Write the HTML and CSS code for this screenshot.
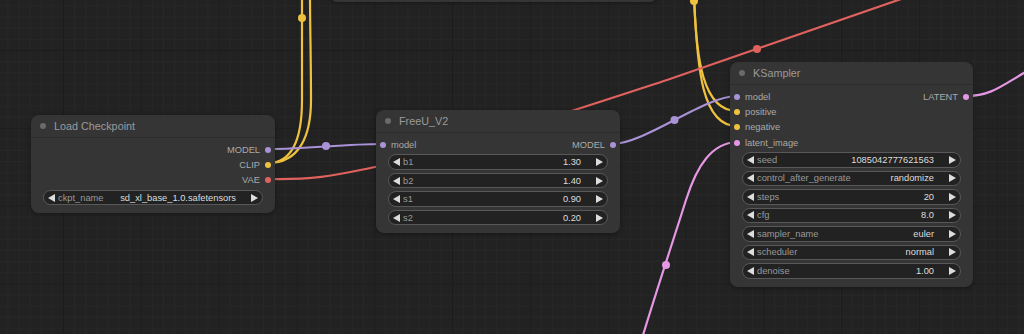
FILE: index.html
```html
<!DOCTYPE html>
<html lang="en">
<head>
  <meta charset="UTF-8">
  <meta name="viewport" content="width=device-width, initial-scale=1.0">
  <title>ComfyUI</title>
  <link rel="stylesheet" href="styles.css">
</head>
<body>

  <div class="canvas">

    <svg class="links" width="1024" height="334" viewBox="0 0 1024 334">
      <g class="link clip">
        <path d="M268,163 C292,163 302,140 302,100 L302,-5"/>
        <path d="M268,163 C300,163 311,135 311,100 C311,60 310,25 310,-5"/>
        <path d="M694,-5 C696,60 703,111 737,111"/>
        <path d="M694,-5 C697,70 702,126 737,126"/>
      </g>
      <g class="link vae">
        <path d="M268,179 C320,180 340,174 375,167 C470,145 560,115 667,80 L930,-11"/>
      </g>
      <g class="link model">
        <path d="M268,149 C310,149 341,144 383,144"/>
        <path d="M612,144 C645,144 704,96 737,96"/>
      </g>
      <g class="link latent">
        <path d="M966,96 C995,96 1005,82 1040,64"/>
        <path d="M737,142 C712,143 697,165 686,200 C675,235 655,295 640,345"/>
      </g>
      <circle class="marker clip" cx="302" cy="18" r="4"/>
      <circle class="marker clip" cx="694" cy="1" r="4"/>
      <circle class="marker model" cx="326" cy="146" r="4"/>
      <circle class="marker model" cx="674.5" cy="120" r="4"/>
      <circle class="marker vae" cx="757" cy="49" r="4"/>
      <circle class="marker latent" cx="666" cy="265" r="4"/>
    </svg>

    <div class="node node--top"></div>

    <!-- Load Checkpoint -->
    <div class="node node--ckpt">
      <div class="node__title"><span class="node__dot"></span>Load Checkpoint</div>
      <div class="node__body">
        <div class="slotRow"><span class="slot slot--out">MODEL<i class="pin model"></i></span></div>
        <div class="slotRow"><span class="slot slot--out">CLIP<i class="pin clip"></i></span></div>
        <div class="slotRow"><span class="slot slot--out">VAE<i class="pin vae"></i></span></div>
        <div class="widgets">
          <div class="widget"><span class="arrow arrow--left"></span><span class="widget__label">ckpt_name</span><span class="widget__value">sd_xl_base_1.0.safetensors</span><span class="arrow arrow--right"></span></div>
        </div>
      </div>
    </div>

    <!-- FreeU_V2 -->
    <div class="node node--freeu">
      <div class="node__title"><span class="node__dot"></span>FreeU_V2</div>
      <div class="node__body">
        <div class="slotRow">
          <span class="slot slot--in"><i class="pin model"></i>model</span>
          <span class="slot slot--out">MODEL<i class="pin model"></i></span>
        </div>
        <div class="widgets">
          <div class="widget"><span class="arrow arrow--left"></span><span class="widget__label">b1</span><span class="widget__value">1.30</span><span class="arrow arrow--right"></span></div>
          <div class="widget"><span class="arrow arrow--left"></span><span class="widget__label">b2</span><span class="widget__value">1.40</span><span class="arrow arrow--right"></span></div>
          <div class="widget"><span class="arrow arrow--left"></span><span class="widget__label">s1</span><span class="widget__value">0.90</span><span class="arrow arrow--right"></span></div>
          <div class="widget"><span class="arrow arrow--left"></span><span class="widget__label">s2</span><span class="widget__value">0.20</span><span class="arrow arrow--right"></span></div>
        </div>
      </div>
    </div>

    <!-- KSampler -->
    <div class="node node--ksampler">
      <div class="node__title"><span class="node__dot"></span>KSampler</div>
      <div class="node__body">
        <div class="slotRow">
          <span class="slot slot--in"><i class="pin model"></i>model</span>
          <span class="slot slot--out">LATENT<i class="pin latent"></i></span>
        </div>
        <div class="slotRow"><span class="slot slot--in"><i class="pin clip"></i>positive</span></div>
        <div class="slotRow"><span class="slot slot--in"><i class="pin clip"></i>negative</span></div>
        <div class="slotRow"><span class="slot slot--in"><i class="pin latent"></i>latent_image</span></div>
        <div class="widgets">
          <div class="widget"><span class="arrow arrow--left"></span><span class="widget__label">seed</span><span class="widget__value">1085042777621563</span><span class="arrow arrow--right"></span></div>
          <div class="widget"><span class="arrow arrow--left"></span><span class="widget__label">control_after_generate</span><span class="widget__value">randomize</span><span class="arrow arrow--right"></span></div>
          <div class="widget"><span class="arrow arrow--left"></span><span class="widget__label">steps</span><span class="widget__value">20</span><span class="arrow arrow--right"></span></div>
          <div class="widget"><span class="arrow arrow--left"></span><span class="widget__label">cfg</span><span class="widget__value">8.0</span><span class="arrow arrow--right"></span></div>
          <div class="widget"><span class="arrow arrow--left"></span><span class="widget__label">sampler_name</span><span class="widget__value">euler</span><span class="arrow arrow--right"></span></div>
          <div class="widget"><span class="arrow arrow--left"></span><span class="widget__label">scheduler</span><span class="widget__value">normal</span><span class="arrow arrow--right"></span></div>
          <div class="widget"><span class="arrow arrow--left"></span><span class="widget__label">denoise</span><span class="widget__value">1.00</span><span class="arrow arrow--right"></span></div>
        </div>
      </div>
    </div>

  </div>

</body>
</html>
```

FILE: styles.css
```css
* {
  box-sizing: border-box;
  padding: 0;
  margin: 0;
}
body {
  width: 1024px;
  height: 334px;
  overflow: hidden;
  background-color: #222222;
  font-family: "Liberation Sans", Arial, sans-serif;
}
.canvas {
  position: relative;
  width: 1024px;
  height: 334px;
  overflow: hidden;
  background-color: #222222;
  background-image:
    linear-gradient(to right, #1c1c1c 1px, transparent 1px),
    linear-gradient(to bottom, #1c1c1c 1px, transparent 1px),
    linear-gradient(to right, #272727 1px, transparent 1px),
    linear-gradient(to bottom, #272727 1px, transparent 1px);
  background-size: 77.8px 77.8px, 77.8px 77.8px, 11.11px 11.11px, 11.11px 11.11px;
  background-position: 63px 50px, 63px 50px, 63px 50px, 63px 50px;
}

/* links */
.links {
  position: absolute;
  left: 0;
  top: 0;
}
.link path {
  fill: none;
  stroke-width: 2.2;
  stroke-linecap: round;
}
.link.clip path { stroke: #eec13f; }
.link.vae path { stroke: #e0625e; }
.link.model path { stroke: #a992d6; }
.link.latent path { stroke: #e597e4; }
.marker.clip { fill: #eec13f; }
.marker.vae { fill: #e0625e; }
.marker.model { fill: #a992d6; }
.marker.latent { fill: #e597e4; }

/* nodes */
.node {
  position: absolute;
  background-color: #353535;
  border-radius: 8px;
  box-shadow: 0 1px 5px rgba(0, 0, 0, .35);
  color: #aaaaaa;
  font-size: 9.3px;
}
.node--top {
  left: 330px;
  top: -12px;
  width: 327px;
  height: 13.5px;
}
.node--ckpt {
  left: 31px;
  top: 115px;
  width: 244px;
}
.node--freeu {
  left: 376px;
  top: 110px;
  width: 244px;
}
.node--ksampler {
  left: 730px;
  top: 62px;
  width: 243px;
}
.node__title {
  display: flex;
  align-items: center;
  height: 23px;
  padding-left: 9px;
  border-bottom: 1px solid #2c2c2c;
  font-size: 10.8px;
  color: #9a9a9a;
}
.node__dot {
  width: 6px;
  height: 6px;
  border-radius: 50%;
  background-color: #6a6a6a;
  margin-right: 8px;
}
.node__body {
  padding: 4px 0 8px;
}
.slotRow {
  display: flex;
  align-items: center;
  height: 15.3px;
}
.slot {
  display: flex;
  align-items: center;
}
.slot--in {
  padding-left: 4px;
}
.slot--out {
  margin-left: auto;
  padding-right: 4px;
}
.pin {
  display: inline-block;
  width: 6px;
  height: 6px;
  border-radius: 50%;
}
.slot--in .pin { margin-right: 5px; }
.slot--out .pin { margin-left: 5px; }
.pin.model { background-color: #a992d6; }
.pin.clip { background-color: #eec13f; }
.pin.vae { background-color: #e0625e; }
.pin.latent { background-color: #e597e4; }

/* widgets */
.widgets {
  display: flex;
  flex-direction: column;
  gap: 3px;
  padding: 0 12px;
  margin-top: 2px;
}
.widget {
  display: flex;
  align-items: center;
  height: 15.5px;
  padding: 0 4px;
  border: 1px solid #585858;
  border-radius: 8px;
  background-color: #222222;
}
.widget__label {
  flex-grow: 1;
  margin-left: 3px;
  color: #999999;
  white-space: nowrap;
}
.widget__value {
  margin-right: 15px;
  color: #dddddd;
  white-space: nowrap;
}
.arrow {
  width: 0;
  height: 0;
  border-top: 4px solid transparent;
  border-bottom: 4px solid transparent;
}
.arrow--left {
  border-right: 7px solid #dddddd;
}
.arrow--right {
  border-left: 7px solid #dddddd;
}
```
